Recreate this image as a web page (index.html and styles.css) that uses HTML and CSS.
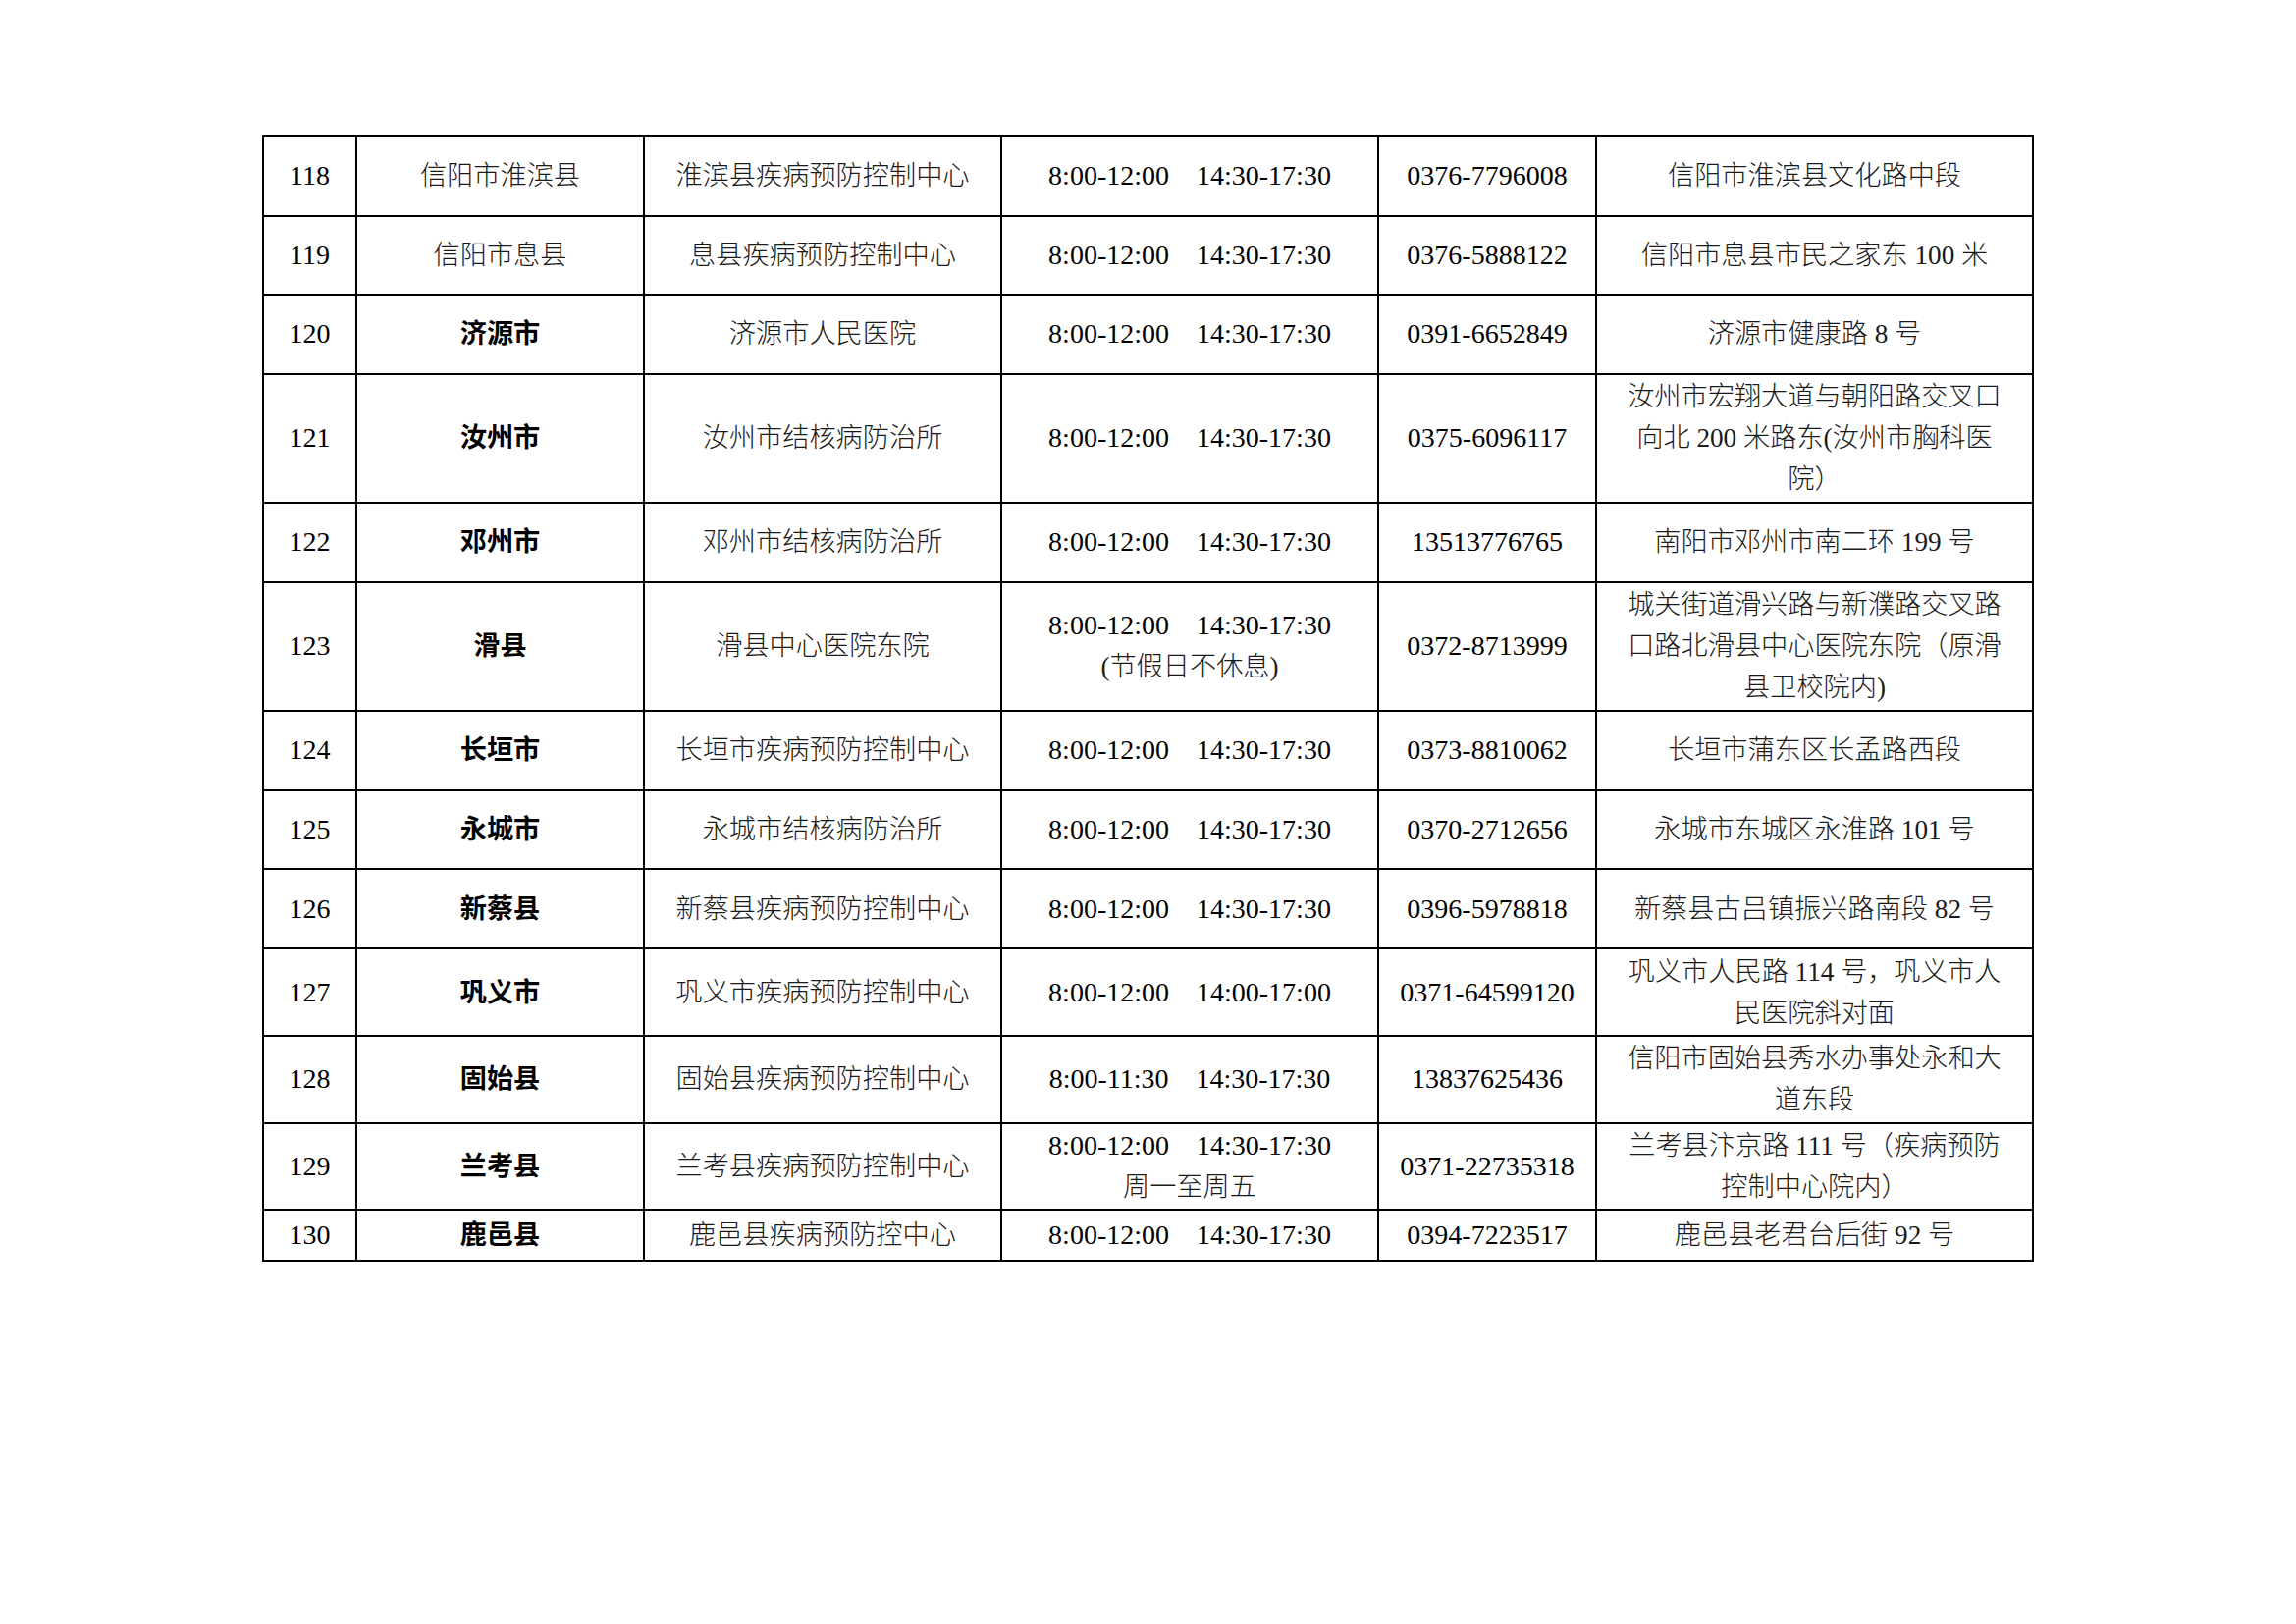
FILE: index.html
```html
<!DOCTYPE html>
<html lang="zh-CN">
<head>
<meta charset="utf-8">
<title>表</title>
<link rel="stylesheet" href="styles.css">
</head>
<body>
<div class="page">
<table class="grid">
<colgroup>
<col class="c-no"><col class="c-area"><col class="c-org"><col class="c-time"><col class="c-tel"><col class="c-addr">
</colgroup>
<tbody>
<tr class="h80"><td class="num">118</td><td class="cn">信阳市淮滨县</td><td class="cn">淮滨县疾病预防控制中心</td><td class="num">8:00-12:00<span class="gap"></span>14:30-17:30</td><td class="num">0376-7796008</td><td class="cn">信阳市淮滨县文化路中段</td></tr>
<tr class="h80"><td class="num">119</td><td class="cn">信阳市息县</td><td class="cn">息县疾病预防控制中心</td><td class="num">8:00-12:00<span class="gap"></span>14:30-17:30</td><td class="num">0376-5888122</td><td class="cn">信阳市息县市民之家东 100 米</td></tr>
<tr class="h80"><td class="num">120</td><td class="cn b">济源市</td><td class="cn">济源市人民医院</td><td class="num">8:00-12:00<span class="gap"></span>14:30-17:30</td><td class="num">0391-6652849</td><td class="cn">济源市健康路 8 号</td></tr>
<tr class="h131"><td class="num">121</td><td class="cn b">汝州市</td><td class="cn">汝州市结核病防治所</td><td class="num">8:00-12:00<span class="gap"></span>14:30-17:30</td><td class="num">0375-6096117</td><td class="cn">汝州市宏翔大道与朝阳路交叉口<br>向北 200 米路东(汝州市胸科医<br>院）</td></tr>
<tr class="h80"><td class="num">122</td><td class="cn b">邓州市</td><td class="cn">邓州市结核病防治所</td><td class="num">8:00-12:00<span class="gap"></span>14:30-17:30</td><td class="num">13513776765</td><td class="cn">南阳市邓州市南二环 199 号</td></tr>
<tr class="h131"><td class="num">123</td><td class="cn b">滑县</td><td class="cn">滑县中心医院东院</td><td class="num">8:00-12:00<span class="gap"></span>14:30-17:30<br><span class="cn">(节假日不休息)</span></td><td class="num">0372-8713999</td><td class="cn">城关街道滑兴路与新濮路交叉路<br>口路北滑县中心医院东院（原滑<br>县卫校院内)</td></tr>
<tr class="h80"><td class="num">124</td><td class="cn b">长垣市</td><td class="cn">长垣市疾病预防控制中心</td><td class="num">8:00-12:00<span class="gap"></span>14:30-17:30</td><td class="num">0373-8810062</td><td class="cn">长垣市蒲东区长孟路西段</td></tr>
<tr class="h80"><td class="num">125</td><td class="cn b">永城市</td><td class="cn">永城市结核病防治所</td><td class="num">8:00-12:00<span class="gap"></span>14:30-17:30</td><td class="num">0370-2712656</td><td class="cn">永城市东城区永淮路 101 号</td></tr>
<tr class="h80"><td class="num">126</td><td class="cn b">新蔡县</td><td class="cn">新蔡县疾病预防控制中心</td><td class="num">8:00-12:00<span class="gap"></span>14:30-17:30</td><td class="num">0396-5978818</td><td class="cn">新蔡县古吕镇振兴路南段 82 号</td></tr>
<tr class="h89"><td class="num">127</td><td class="cn b">巩义市</td><td class="cn">巩义市疾病预防控制中心</td><td class="num">8:00-12:00<span class="gap"></span>14:00-17:00</td><td class="num">0371-64599120</td><td class="cn">巩义市人民路 114 号，巩义市人<br>民医院斜对面</td></tr>
<tr class="h88"><td class="num">128</td><td class="cn b">固始县</td><td class="cn">固始县疾病预防控制中心</td><td class="num">8:00-11:30<span class="gap"></span>14:30-17:30</td><td class="num">13837625436</td><td class="cn">信阳市固始县秀水办事处永和大<br>道东段</td></tr>
<tr class="h88"><td class="num">129</td><td class="cn b">兰考县</td><td class="cn">兰考县疾病预防控制中心</td><td class="num">8:00-12:00<span class="gap"></span>14:30-17:30<br><span class="cn">周一至周五</span></td><td class="num">0371-22735318</td><td class="cn">兰考县汴京路 111 号（疾病预防<br>控制中心院内）</td></tr>
<tr class="h52"><td class="num">130</td><td class="cn b">鹿邑县</td><td class="cn">鹿邑县疾病预防控中心</td><td class="num">8:00-12:00<span class="gap"></span>14:30-17:30</td><td class="num">0394-7223517</td><td class="cn">鹿邑县老君台后街 92 号</td></tr>
</tbody>
</table>
</div>
</body>
</html>
```
FILE: styles.css
```css
html, body {
  margin: 0;
  padding: 0;
  background: #ffffff;
}
body {
  width: 2339px;
  height: 1654px;
  overflow: hidden;
  color: #000;
  font-family: "Liberation Serif", "Noto Sans CJK SC", serif;
}
.page {
  padding: 138px 0 0 267px;
}
.grid {
  border-collapse: collapse;
  table-layout: fixed;
  width: 1803px;
}
.c-no { width: 95px; }
.c-area { width: 293px; }
.c-org { width: 364px; }
.c-time { width: 384px; }
.c-tel { width: 222px; }
.c-addr { width: 445px; }
.grid td {
  border: 2px solid #000;
  padding: 0;
  text-align: center;
  vertical-align: middle;
  font-size: 28px;
  line-height: 42px;
  white-space: nowrap;
  overflow: hidden;
}
.grid td.cn, .grid span.cn {
  font-size: 27.2px;
  letter-spacing: 0;
  font-weight: 300;
  color: #1a1a1a;
}
.grid td.b {
  font-weight: 700;
  color: #000;
}
.gap {
  display: inline-block;
  width: 28px;
}
.h80 td { height: 78.6px; }
.h131 td { height: 129.4px; }
.h89 td { height: 87.4px; }
.h88 td { height: 86.2px; }
.h52 td { height: 50.2px; }
```
